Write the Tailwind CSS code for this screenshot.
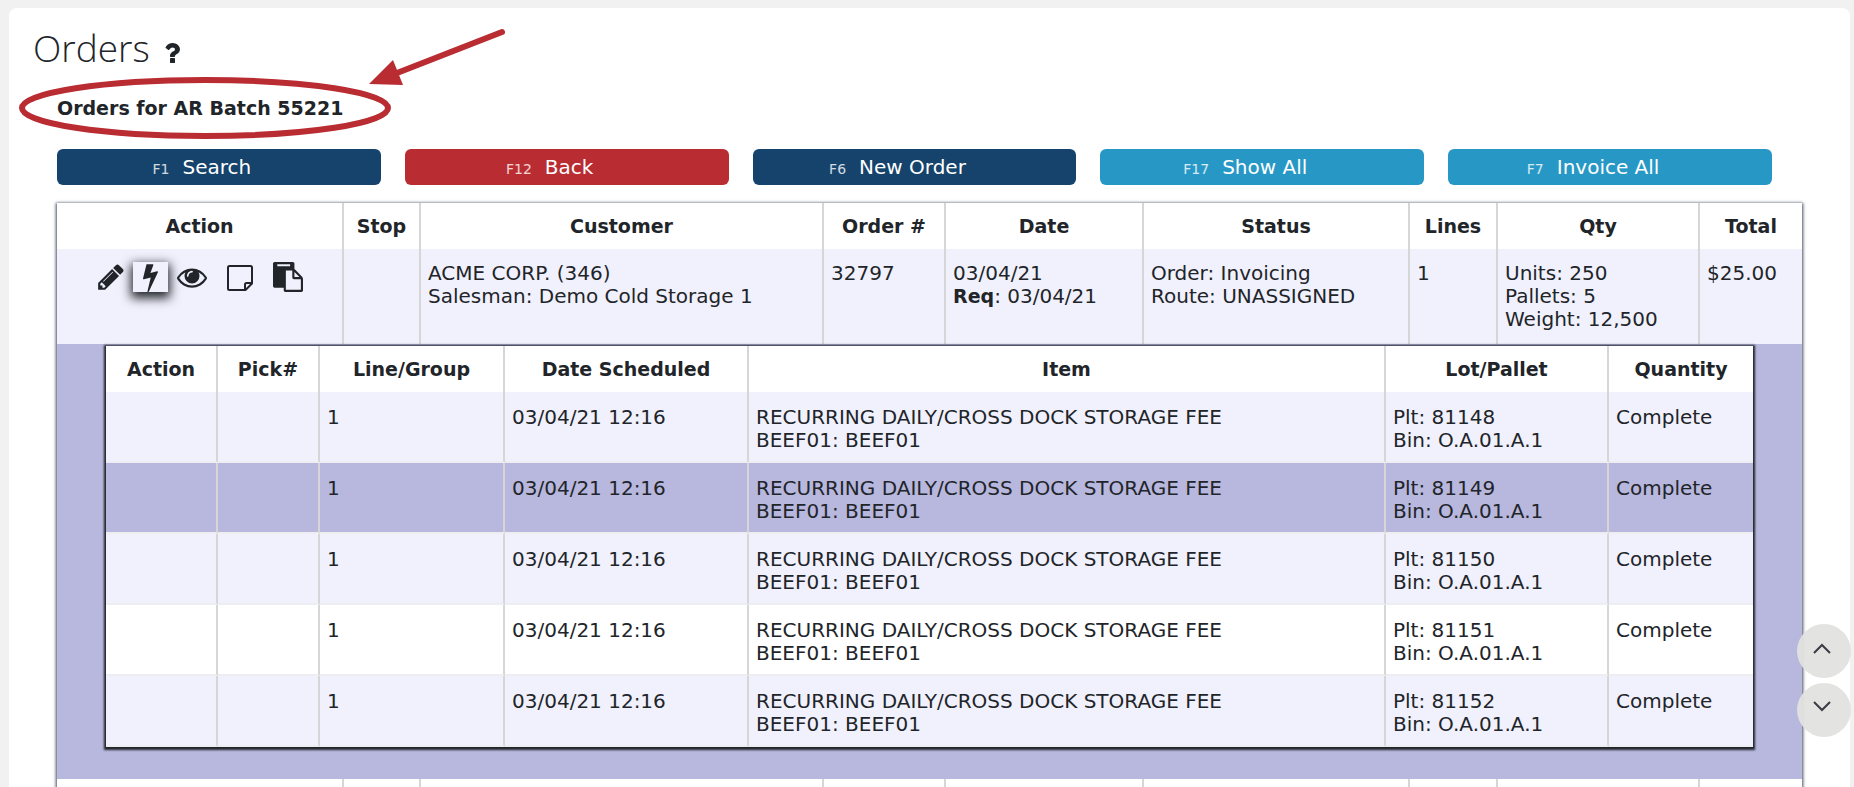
<!DOCTYPE html>
<html lang="en">
  <head>
    <meta charset="UTF-8" />
    <meta name="viewport" content="width=device-width, initial-scale=1.0" />
    <title>Orders</title>
    <script src="https://cdn.jsdelivr.net/npm/@tailwindcss/browser@4"></script>
  </head>
  <body class="h-screen overflow-hidden bg-[#f2f1f1] pt-2 pr-1 pl-[9px] font-['Verdana','DejaVu_Sans',sans-serif] text-[20px] leading-[23px] text-[#212529]">
    <main class="relative min-h-screen rounded-lg bg-white pt-3 pr-12 pl-12">
      <header class="-ml-6 flex items-center gap-[14px]">
        <h1 class="font-['Open_Sans',sans-serif] text-[37px] leading-[56px] font-light">Orders</h1>
        <button class="pt-[7px]" aria-label="Help">
          <svg class="h-[22px] w-4" viewBox="384 128 1024 1408" fill="currentColor"><path d="M1088 1256v240q0 16-12 28t-28 12h-240q-16 0-28-12t-12-28v-240q0-16 12-28t28-12h240q16 0 28 12t12 28zm316-600q0 54-15.5 101t-35 76.5-55 59.5-57.5 43.5-61 35.5q-41 23-68.5 65t-27.5 67q0 17-12 32.5t-28 15.5h-240q-15 0-25.5-18.5t-10.5-37.5v-45q0-83 65-156.5t143-108.5q59-27 84-56t25-76q0-42-46.5-74t-107.5-32q-65 0-108 29-35 25-107 115-13 16-31 16-12 0-25-8l-164-125q-13-10-15.5-25t5.500-28q160-266 464-266 80 0 161 31t146 83 106 127.500 41 158.500z" /></svg>
        </button>
      </header>
      <h2 class="mt-[21px] text-[19px] leading-[23px] font-bold">Orders for AR Batch 55221</h2>

      <!-- callout -->
      <svg class="pointer-events-none absolute top-4 left-2 h-[120px] w-[500px]" viewBox="17 24 500 120" fill="none" stroke="#b92c32" stroke-width="6">
        <ellipse cx="205" cy="108" rx="183" ry="28" />
        <path d="M502 32L397 73" stroke-linecap="round" />
        <path d="M369 84L393 60L403 85Z" fill="#b92c32" stroke="none" />
      </svg>

      <nav class="mt-[29px] mr-[30px] grid grid-cols-5 gap-6 text-white">
        <button class="flex h-9 items-baseline justify-center gap-[13px] rounded-md bg-[#15436c] pt-[7px] pr-[34px]"><span class="text-sm text-white/80">F1</span>Search</button>
        <button class="flex h-9 items-baseline justify-center gap-[13px] rounded-md bg-[#b92c32] pt-[7px] pr-[34px]"><span class="text-sm text-white/80">F12</span>Back</button>
        <button class="flex h-9 items-baseline justify-center gap-[13px] rounded-md bg-[#15436c] pt-[7px] pr-[34px]"><span class="text-sm text-white/80">F6</span>New Order</button>
        <button class="flex h-9 items-baseline justify-center gap-[13px] rounded-md bg-[#2798c6] pt-[7px] pr-[34px]"><span class="text-sm text-white/80">F17</span>Show All</button>
        <button class="flex h-9 items-baseline justify-center gap-[13px] rounded-md bg-[#2798c6] pt-[7px] pr-[34px]"><span class="text-sm text-white/80">F7</span>Invoice All</button>
      </nav>

      <table class="mt-[18px] w-full table-fixed border-separate border-spacing-0 bg-white shadow-[0_1px_3px_1px_#444a60]">
        <colgroup>
          <col class="w-[287px]" />
          <col class="w-[77px]" />
          <col />
          <col class="w-[122px]" />
          <col class="w-[198px]" />
          <col class="w-[266px]" />
          <col class="w-[88px]" />
          <col class="w-[202px]" />
          <col class="w-[102px]" />
        </colgroup>
        <thead class="text-[19px] [&_th]:h-[46px] [&_th]:border-[#d6d6d6] [&_th:not(:last-child)]:border-r-2">
          <tr>
            <th>Action</th>
            <th>Stop</th>
            <th>Customer</th>
            <th>Order #</th>
            <th>Date</th>
            <th>Status</th>
            <th>Lines</th>
            <th>Qty</th>
            <th>Total</th>
          </tr>
        </thead>
        <tbody>
          <tr class="bg-[#f1f1fd] align-top [&>td]:border-[#d6d6d6] [&>td]:py-[13px] [&>td]:pl-[7px] [&>td:not(:last-child)]:border-r-2">
            <td>
              <div class="ml-[29px] flex gap-1">
                <button class="px-[5px]" aria-label="Edit">
                  <svg class="h-[30px] w-[26px]" viewBox="128 0 1536 1792" fill="currentColor"><path d="M491 1536l91-91-235-235-91 91v107h128v128h107zm523-928q0-22-22-22-10 0-17 7l-542 542q-7 7-7 17 0 22 22 22 10 0 17-7l542-542q7-7 7-17zm-54-192l416 416-832 832h-416v-416zm683 96q0 53-37 90l-166 166-416-416 166-165q36-38 90-38 53 0 91 38l235 234q37 39 37 91z" /></svg>
                </button>
                <button class="bg-[#f1f1fd] px-[10px] shadow-[0_4px_10px_2px_#212529]" aria-label="Process">
                  <svg class="h-[30px] w-[15px]" viewBox="448 0 896 1792" fill="currentColor"><path d="M1333 566q18 20 7 44l-540 1157q-13 25-42 25-4 0-14-2-17-5-25.5-19t-4.5-30l197-808-406 101q-4 1-12 1-18 0-31-11-18-15-13-39l201-825q4-14 16-23t28-9h328q19 0 32 12.5t13 29.5q0 8-5 18l-171 463 396-98q8-2 12-2 19 0 34 15z" /></svg>
                </button>
                <button class="px-[5px]" aria-label="View">
                  <svg class="h-[30px] w-[30px]" viewBox="0 0 1792 1792" fill="currentColor"><path d="M1664 960q-152-236-381-353 61 104 61 225 0 185-131.5 316.5t-316.5 131.5-316.5-131.5-131.5-316.5q0-121 61-225-229 117-381 353 133 205 333.5 326.5t434.5 121.5 434.5-121.5 333.5-326.5zm-720-384q0-20-14-34t-34-14q-125 0-214.5 89.5t-89.5 214.5q0 20 14 34t34 14 34-14 14-34q0-86 61-147t147-61q20 0 34-14t14-34zm848 384q0 34-20 69-140 230-376.5 368.5t-499.5 138.5-499.5-139-376.5-368q-20-35-20-69t20-69q140-229 376.5-368t499.5-139 499.5 139 376.5 368q20 35 20 69z" /></svg>
                </button>
                <button class="ml-[6px] px-[5px]" aria-label="Notes">
                  <svg class="h-[30px] w-[26px]" viewBox="0 0 26 30" fill="none" stroke="currentColor" stroke-width="2" stroke-linejoin="round"><path d="M2.5 4H23.5Q25 4 25 5.5V21.5L18.5 28H2.5Q1 28 1 26.5V5.5Q1 4 2.5 4Z" /><path d="M25 21H19.5Q18 21 18 22.5V28" /></svg>
                </button>
                <button class="ml-[6px] px-[5px]" aria-label="Copy">
                  <svg class="h-[30px] w-[30px]" viewBox="0 0 1792 1792" fill="currentColor"><path d="M768 1664h896v-640h-416q-40 0-68-28t-28-68v-416h-384v1152zm256-1440v-64q0-13-9.5-22.5t-22.5-9.5h-704q-13 0-22.5 9.5t-9.5 22.5v64q0 13 9.5 22.5t22.5 9.5h704q13 0 22.5-9.5t9.5-22.5zm256 672h299l-299-299v299zm512 128v672q0 40-28 68t-68 28h-960q-40 0-68-28t-28-68v-160h-544q-40 0-68-28t-28-68v-1344q0-40 28-68t68-28h1088q40 0 68 28t28 68v328q21 13 36 28l408 408q28 28 48 76t20 88z" /></svg>
                </button>
              </div>
            </td>
            <td></td>
            <td>ACME CORP. (346)<br />Salesman: Demo Cold Storage 1</td>
            <td>32797</td>
            <td>03/04/21<br /><b class="text-[19px]">Req</b>: 03/04/21</td>
            <td>Order: Invoicing<br />Route: UNASSIGNED</td>
            <td>1</td>
            <td>Units: 250<br />Pallets: 5<br />Weight: 12,500</td>
            <td>$25.00</td>
          </tr>
          <tr class="bg-[#b8b7de]">
            <td colspan="9" class="px-[49px] pt-[2px] pb-8">
              <table class="w-full table-fixed border-separate border-spacing-0 bg-white shadow-[0_1px_2px_2px_#212529] [&_td]:border-[#d6d6d6] [&_td]:pt-[14px] [&_td]:pb-[9px] [&_td]:pl-[7px] [&_td:not(:last-child)]:border-r-2 [&_th]:h-[46px] [&_th]:border-[#d6d6d6] [&_th:not(:last-child)]:border-r-2">
                <colgroup>
                  <col class="w-[112px]" />
                  <col class="w-[102px]" />
                  <col class="w-[185px]" />
                  <col class="w-[244px]" />
                  <col />
                  <col class="w-[223px]" />
                  <col class="w-[144px]" />
                </colgroup>
                <thead class="text-[19px]">
                  <tr>
                    <th>Action</th>
                    <th>Pick#</th>
                    <th>Line/Group</th>
                    <th>Date Scheduled</th>
                    <th>Item</th>
                    <th>Lot/Pallet</th>
                    <th>Quantity</th>
                  </tr>
                </thead>
                <tbody class="align-top [&_td]:border-b-2 [&_td]:border-b-[#eeeef2]">
                  <tr class="bg-[#f1f1fd]">
                    <td></td>
                    <td></td>
                    <td>1</td>
                    <td>03/04/21 12:16</td>
                    <td>RECURRING DAILY/CROSS DOCK STORAGE FEE<br />BEEF01: BEEF01</td>
                    <td>Plt: 81148<br />Bin: O.A.01.A.1</td>
                    <td>Complete</td>
                  </tr>
                  <tr class="bg-[#b8b7de]">
                    <td></td>
                    <td></td>
                    <td>1</td>
                    <td>03/04/21 12:16</td>
                    <td>RECURRING DAILY/CROSS DOCK STORAGE FEE<br />BEEF01: BEEF01</td>
                    <td>Plt: 81149<br />Bin: O.A.01.A.1</td>
                    <td>Complete</td>
                  </tr>
                  <tr class="bg-[#f1f1fd]">
                    <td></td>
                    <td></td>
                    <td>1</td>
                    <td>03/04/21 12:16</td>
                    <td>RECURRING DAILY/CROSS DOCK STORAGE FEE<br />BEEF01: BEEF01</td>
                    <td>Plt: 81150<br />Bin: O.A.01.A.1</td>
                    <td>Complete</td>
                  </tr>
                  <tr class="bg-white">
                    <td></td>
                    <td></td>
                    <td>1</td>
                    <td>03/04/21 12:16</td>
                    <td>RECURRING DAILY/CROSS DOCK STORAGE FEE<br />BEEF01: BEEF01</td>
                    <td>Plt: 81151<br />Bin: O.A.01.A.1</td>
                    <td>Complete</td>
                  </tr>
                  <tr class="bg-[#f1f1fd]">
                    <td></td>
                    <td></td>
                    <td>1</td>
                    <td>03/04/21 12:16</td>
                    <td>RECURRING DAILY/CROSS DOCK STORAGE FEE<br />BEEF01: BEEF01</td>
                    <td>Plt: 81152<br />Bin: O.A.01.A.1</td>
                    <td>Complete</td>
                  </tr>
                </tbody>
              </table>
            </td>
          </tr>
          <tr class="bg-white [&>td]:h-[95px] [&>td]:border-[#d6d6d6] [&>td:not(:last-child)]:border-r-2">
            <td></td>
            <td></td>
            <td></td>
            <td></td>
            <td></td>
            <td></td>
            <td></td>
            <td></td>
            <td></td>
          </tr>
        </tbody>
      </table>
    </main>

    <div class="fixed right-[3px] bottom-[50px] flex flex-col gap-[5px]">
      <button class="flex size-[54px] items-center justify-center rounded-full bg-[#e1e1df]/95" aria-label="Scroll up">
        <svg class="mr-1 mb-1 h-3 w-[18px]" viewBox="0 0 18 12" fill="none" stroke="#3b3b44" stroke-width="2"><path d="M1 10L9 2L17 10" /></svg>
      </button>
      <button class="flex size-[54px] items-center justify-center rounded-full bg-[#e1e1df]/95" aria-label="Scroll down">
        <svg class="mr-1 mb-2 h-3 w-[18px]" viewBox="0 0 18 12" fill="none" stroke="#3b3b44" stroke-width="2"><path d="M1 2L9 10L17 2" /></svg>
      </button>
    </div>
  </body>
</html>
